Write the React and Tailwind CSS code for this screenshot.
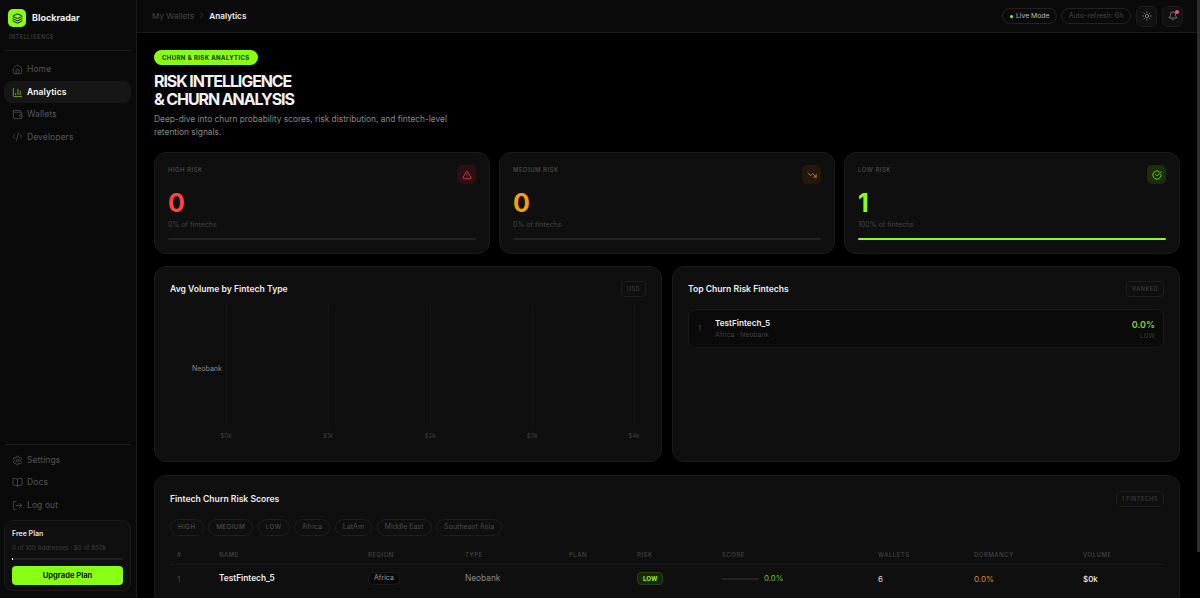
import React from "react";
import {
  AlertTriangle,
  BarChart3,
  Bell,
  BookOpen,
  CheckCircle,
  ChevronRight,
  Code2,
  Home,
  Layers,
  LogOut,
  Settings,
  Sun,
  TrendingDown,
  Wallet,
} from "lucide-react";

const NavItem = ({ icon: Icon, label, active }) => (
  <div className={`flex items-center gap-[4px] h-[22px] pl-[8px] rounded-lg text-[8.5px] tracking-[0.1px] ${active ? "bg-[#161616] text-white font-semibold" : "text-[#555555]"}`}>
    <Icon size={11} strokeWidth={1.6} className={active ? "text-[#7ed321]" : "text-[#555555]"} />
    <span>{label}</span>
  </div>
);

const StatCard = ({ label, value, sub, textClass, iconBg, icon: Icon, fillClass }) => (
  <div className="flex-1 h-[102px] bg-[#0f0f0f] border border-[#1a1a1a] rounded-xl px-[13px] pt-[11px]">
    <div className="flex justify-between items-start h-[21px]">
      <span className="text-[6px] tracking-[0.5px] text-[#4d4d4d] font-medium mt-[1px]">{label}</span>
      <div className={`w-[19px] h-[19px] mt-[1px] rounded-[5px] flex items-center justify-center ${iconBg}`}>
        <Icon size={10} strokeWidth={1.8} className={textClass} />
      </div>
    </div>
    <div className={`text-[25px] leading-[28px] font-bold mt-[4px] ${textClass}`}>{value}</div>
    <div className="text-[7px] text-[#444444] mt-[3px]">{sub}</div>
    <div className="h-[2px] bg-[#222222] rounded-full mt-[7px]">
      <div className={`h-[2px] rounded-full bg-[#88ff14] ${fillClass}`} />
    </div>
  </div>
);

const Tag = ({ children }) => (
  <span className="h-[16px] px-[5px] flex items-center border border-[#1d1d1d] rounded text-[5.5px] tracking-[0.5px] text-[#3f3f3f] font-medium">{children}</span>
);

const Pill = ({ children, caps }) => (
  <span className={`h-[17px] flex items-center border border-[#1e1e1e] rounded-full text-[#4a4a4a] ${caps ? "px-[7px] text-[6.4px] tracking-[0.4px] font-medium" : "px-[7px] text-[7.1px]"}`}>{children}</span>
);

const Th = ({ children }) => (
  <div className="text-[6px] tracking-[0.5px] text-[#444444] font-medium">{children}</div>
);

const cols = "grid grid-cols-[42px_149px_97px_104px_68px_85px_156px_96px_109px_1fr] items-center pl-[7px]";

export default function App() {
  return (
    <div className="relative flex h-[598px] w-[1200px] overflow-hidden bg-black text-white font-['Inter','Liberation_Sans',sans-serif]">
      <aside className="w-[137px] shrink-0 bg-[#0a0a0a] border-r border-[#1a1a1a] flex flex-col">
        <div className="px-[8px] pt-[9px]">
          <div className="flex items-center gap-[6px]">
            <div className="w-[18px] h-[18px] rounded-[5px] bg-[#88ff14] flex items-center justify-center">
              <Layers size={11} strokeWidth={2} className="text-black" />
            </div>
            <span className="text-[9px] font-bold text-[#eeeeee]">Blockradar</span>
          </div>
          <div className="text-[5.5px] tracking-[0.5px] text-[#4a4a4a] mt-[6px] ml-[1px]">INTELLIGENCE</div>
        </div>
        <div className="h-px bg-[#1c1c1c] mx-[5px] mt-[9px]" />
        <nav className="flex flex-col gap-[0.4px] pl-[4px] pr-[5px] pt-[7.5px]">
          <NavItem icon={Home} label="Home" />
          <NavItem icon={BarChart3} label="Analytics" active />
          <NavItem icon={Wallet} label="Wallets" />
          <NavItem icon={Code2} label="Developers" />
        </nav>
        <div className="mt-auto">
          <div className="h-px bg-[#1c1c1c] mx-[5px]" />
          <div className="flex flex-col gap-[0.5px] pl-[4px] pr-[5px] pt-[4px]">
            <NavItem icon={Settings} label="Settings" />
            <NavItem icon={BookOpen} label="Docs" />
            <NavItem icon={LogOut} label="Log out" />
          </div>
          <div className="ml-[4px] mr-[5px] mt-[4px] mb-[7px] h-[71px] bg-[#0f0f0f] border border-[#1a1a1a] rounded-lg px-[7px] pt-[8px]">
            <div className="text-[7px] font-semibold text-[#e5e5e5]">Free Plan</div>
            <div className="text-[6.2px] text-[#3f3f3f] mt-[3px] whitespace-nowrap">0 of 100 Addresses · $0 of $50k</div>
            <div className="h-[2px] bg-[#1f1f1f] rounded-full mt-[6px]">
              <div className="h-[2px] w-[1px] bg-white" />
            </div>
            <div className="h-[19px] mt-[6px] rounded bg-[#88ff14] flex items-center justify-center text-[7.6px] font-semibold text-black">Upgrade Plan</div>
          </div>
        </div>
      </aside>

      <div className="flex-1 min-w-0 flex flex-col">
        <header className="h-[33px] shrink-0 bg-[#0a0a0a] border-b border-[#1a1a1a] flex items-center justify-between pl-[15px] pr-[17px]">
          <div className="flex items-center gap-[3px] text-[8.2px]">
            <span className="text-[#444444]">My Wallets</span>
            <ChevronRight size={9} strokeWidth={1.6} className="text-[#555555]" />
            <span className="font-semibold text-[#eeeeee]">Analytics</span>
          </div>
          <div className="flex items-center">
            <div className="h-[16px] w-[55px] pl-[7px] flex items-center gap-[3px] border border-[#222222] rounded-full text-[6.8px] text-[#bbbbbb] whitespace-nowrap">
              <span className="w-[3px] h-[3px] rounded-full bg-[#88ff14]" />
              Live Mode
            </div>
            <div className="h-[16px] w-[70px] ml-[4px] flex items-center justify-center border border-[#222222] rounded-full text-[7px] text-[#444444] whitespace-nowrap">Auto-refresh: 6h</div>
            <div className="w-[21px] h-[21px] ml-[5px] flex items-center justify-center border border-[#1c1c1c] bg-[#111111] rounded-md">
              <Sun size={10} strokeWidth={1.6} className="text-[#aaaaaa]" />
            </div>
            <div className="relative w-[21px] h-[21px] ml-[5px] flex items-center justify-center border border-[#1c1c1c] bg-[#111111] rounded-md">
              <Bell size={10} strokeWidth={1.6} className="text-[#aaaaaa]" />
              <span className="absolute top-[3px] right-[3px] w-[4px] h-[4px] rounded-full bg-[#ff4d6a]" />
            </div>
          </div>
        </header>

        <main className="flex-1 min-h-0 overflow-hidden pl-[17px] pr-[20px] pt-[17px]">
          <div className="flex items-center w-fit h-[15px] px-[8px] rounded-full bg-[#88ff14] text-[6px] font-bold tracking-[0.4px] text-[#143300]">CHURN &amp; RISK ANALYTICS</div>
          <h1 className="text-[16px] leading-[18px] font-bold tracking-[-1.1px] mt-[7px] text-[#f2f2f2]">RISK INTELLIGENCE<br />&amp; CHURN ANALYSIS</h1>
          <p className="text-[8.36px] leading-[13px] text-[#888888] mt-[5px] w-[310px]">Deep-dive into churn probability scores, risk distribution, and fintech-level retention signals.</p>

          <div className="flex gap-[9px] mt-[13px]">
            <StatCard label="HIGH RISK" value="0" sub="0% of fintechs" textClass="text-[#ff4444]" iconBg="bg-[#2a1111]" icon={AlertTriangle} fillClass="w-0" />
            <StatCard label="MEDIUM RISK" value="0" sub="0% of fintechs" textClass="text-[#f59e0b]" iconBg="bg-[#241808]" icon={TrendingDown} fillClass="w-0" />
            <StatCard label="LOW RISK" value="1" sub="100% of fintechs" textClass="text-[#88ff14]" iconBg="bg-[#1a2e0a]" icon={CheckCircle} fillClass="w-full" />
          </div>

          <div className="flex gap-[10px] mt-[12px]">
            <section className="w-[508px] h-[196px] bg-[#0f0f0f] border border-[#1a1a1a] rounded-xl px-[15px] pt-[14px]">
              <div className="flex items-center justify-between h-[16px]">
                <h2 className="text-[8.6px] font-semibold text-[#eeeeee]">Avg Volume by Fintech Type</h2>
                <Tag>USD</Tag>
              </div>
              <div className="relative flex justify-between pl-[56px] pr-[12px] mt-[9px]">
                {["$0k", "$1k", "$2k", "$3k", "$4k"].map((tick) => (
                  <div key={tick} className="w-0 flex flex-col items-center">
                    <div className="h-[120px] border-l border-dotted border-[#1c1c1c]" />
                    <span className="mt-[5px] text-[6.2px] text-[#3f3f3f]">{tick}</span>
                  </div>
                ))}
                <span className="absolute top-[58px] left-[22px] text-[7px] text-[#888888]">Neobank</span>
              </div>
            </section>
            <section className="flex-1 h-[196px] bg-[#0f0f0f] border border-[#1a1a1a] rounded-xl px-[15px] pt-[14px]">
              <div className="flex items-center justify-between h-[16px]">
                <h2 className="text-[8.6px] font-semibold text-[#eeeeee]">Top Churn Risk Fintechs</h2>
                <Tag>RANKED</Tag>
              </div>
              <div className="h-[39px] mt-[12px] bg-[#0a0a0a] border border-[#1a1a1a] rounded-lg flex items-center pl-[9px] pr-[8px]">
                <span className="text-[7.5px] text-[#444444] w-[17px]">1</span>
                <div className="flex-1">
                  <div className="text-[8.2px] font-semibold text-[#eeeeee] leading-[12px]">TestFintech_5</div>
                  <div className="text-[6.8px] text-[#3f3f3f] mt-[1px]">Africa · Neobank</div>
                </div>
                <div className="text-right">
                  <div className="text-[9px] font-semibold text-[#7ed321] leading-[13px]">0.0%</div>
                  <div className="text-[6px] tracking-[0.4px] text-[#3f3f3f]">LOW</div>
                </div>
              </div>
            </section>
          </div>

          <section className="h-[140px] mt-[13px] bg-[#0f0f0f] border border-[#1a1a1a] rounded-xl px-[15px] pt-[15px]">
            <div className="flex items-center justify-between h-[16px]">
              <h2 className="text-[8.6px] font-semibold text-[#eeeeee]">Fintech Churn Risk Scores</h2>
              <Tag>1 FINTECHS</Tag>
            </div>
            <div className="flex gap-[4.5px] mt-[12px]">
              <Pill caps>HIGH</Pill>
              <Pill caps>MEDIUM</Pill>
              <Pill caps>LOW</Pill>
              <Pill>Africa</Pill>
              <Pill>LatAm</Pill>
              <Pill>Middle East</Pill>
              <Pill>Southeast Asia</Pill>
            </div>
            <div className={`${cols} h-[21px] mt-[8px] border-b border-[#1a1a1a]`}>
              <Th>#</Th><Th>NAME</Th><Th>REGION</Th><Th>TYPE</Th><Th>PLAN</Th><Th>RISK</Th><Th>SCORE</Th><Th>WALLETS</Th><Th>DORMANCY</Th><Th>VOLUME</Th>
            </div>
            <div className={`${cols} h-[27px]`}>
              <span className="text-[8px] text-[#444444]">1</span>
              <span className="text-[8.3px] font-semibold text-[#eeeeee]">TestFintech_5</span>
              <span className="flex"><span className="h-[13px] flex items-center px-[5px] bg-[#0a0a0a] border border-[#1a1a1a] rounded text-[7px] text-[#999999]">Africa</span></span>
              <span className="text-[8.3px] text-[#888888]">Neobank</span>
              <span />
              <span className="flex"><span className="h-[13px] flex items-center px-[5px] bg-[#14280a] border border-[#24440f] rounded text-[6.2px] font-bold text-[#88ff14]">LOW</span></span>
              <span className="flex items-center gap-[5px]">
                <span className="w-[37px] h-[2px] bg-[#222222] rounded-full" />
                <span className="text-[7.8px] text-[#6cbf1d]">0.0%</span>
              </span>
              <span className="text-[8px] text-[#dddddd]">6</span>
              <span className="text-[8px] text-[#d9921a]">0.0%</span>
              <span className="text-[8px] font-medium text-[#eeeeee]">$0k</span>
            </div>
          </section>
        </main>
      </div>
      <div className="absolute top-0 right-0 w-[3px] h-[552px] bg-[#2e2e2e]" />
    </div>
  );
}
